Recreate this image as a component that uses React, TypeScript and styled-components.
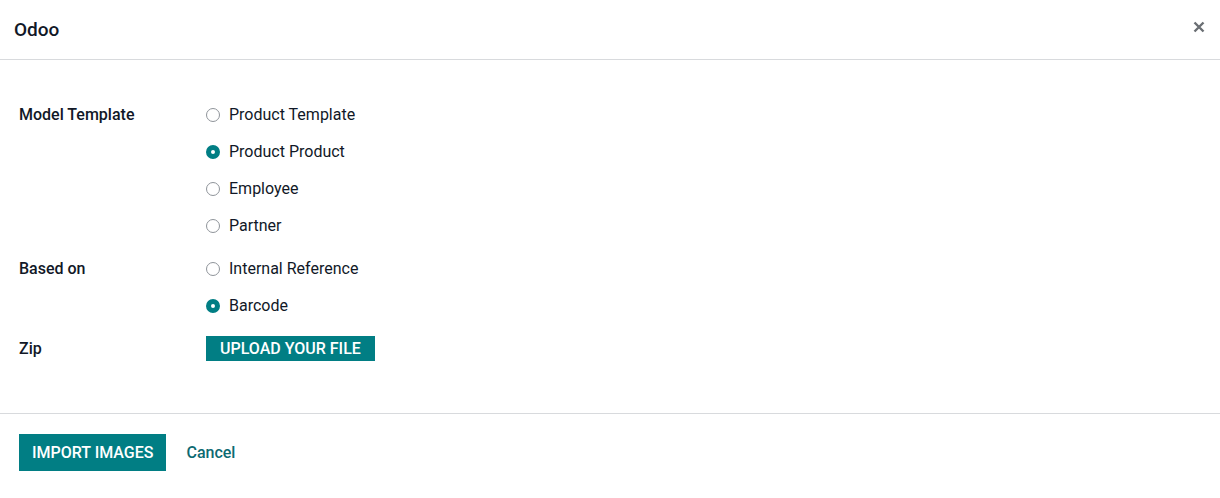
import React, { useState } from 'react';
import styled, { createGlobalStyle } from 'styled-components';

const teal = '#017e84';

const GlobalStyle = createGlobalStyle`
  html, body {
    margin: 0;
    padding: 0;
    background: #ffffff;
  }
  body {
    font-family: Roboto, "Noto Sans", sans-serif;
    color: #111827;
  }
`;

const Dialog = styled.div`
  width: 1220px;
  height: 498px;
  display: flex;
  flex-direction: column;
  background: #fff;
`;

const Header = styled.header`
  height: 59px;
  border-bottom: 1px solid #d8dadd;
  display: flex;
  align-items: center;
  justify-content: space-between;
  padding: 0 14px;
  box-sizing: content-box;
`;

const Title = styled.h4`
  margin: 0;
  font-size: 19px;
  font-weight: 500;
  color: #111827;
  line-height: 1;
  margin-top: -1px;
`;

const CloseButton = styled.button`
  border: 0;
  background: none;
  padding: 0;
  width: 14px;
  height: 14px;
  cursor: pointer;
  margin-top: -6px;
  display: flex;
  align-items: center;
  justify-content: center;
`;

const Body = styled.main`
  flex: 1;
  padding: 36px 19px 0;
  display: flex;
  flex-direction: column;
  gap: 6px;
`;

const Field = styled.div`
  display: grid;
  grid-template-columns: 187px 1fr;
`;

const Label = styled.div`
  height: 37px;
  display: flex;
  align-items: center;
  font-size: 16px;
  font-weight: 500;
  color: #111827;
`;

const Options = styled.div`
  display: flex;
  flex-direction: column;
`;

const Option = styled.label`
  height: 37px;
  display: flex;
  align-items: center;
  gap: 9px;
  font-size: 16px;
  color: #111827;
  cursor: pointer;
`;

const Radio = styled.span<{ $checked: boolean }>`
  width: 14px;
  height: 14px;
  border-radius: 50%;
  box-sizing: border-box;
  border: ${p => (p.$checked ? `5px solid ${teal}` : '1px solid #8f949a')};
  background: #fff;
  flex: none;
`;

const ButtonCell = styled.div`
  height: 37px;
  display: flex;
  align-items: center;
`;

const UploadButton = styled.button`
  height: 25px;
  padding: 0 14px;
  border: 0;
  border-radius: 0;
  background: ${teal};
  color: #fff;
  font-family: Roboto, sans-serif;
  font-size: 16px;
  font-weight: 500;
  text-transform: uppercase;
  cursor: pointer;
`;

const Footer = styled.footer`
  border-top: 1px solid #d8dadd;
  padding: 20px 19px 27px;
  display: flex;
  align-items: center;
  gap: 8px;
`;

const PrimaryButton = styled.button`
  height: 37px;
  padding: 0 13px;
  border: 0;
  border-radius: 0;
  background: ${teal};
  color: #fff;
  font-family: Roboto, sans-serif;
  font-size: 16px;
  font-weight: 500;
  cursor: pointer;
`;

const LinkButton = styled.button`
  height: 37px;
  padding: 0 12px;
  border: 0;
  background: none;
  color: #0d6a72;
  font-family: Roboto, sans-serif;
  font-size: 16px;
  font-weight: 500;
  cursor: pointer;
`;

type Opt = { value: string; label: string };

function RadioGroup({
  options,
  value,
  onChange,
}: {
  options: Opt[];
  value: string;
  onChange: (v: string) => void;
}) {
  return (
    <Options>
      {options.map(o => (
        <Option key={o.value} onClick={() => onChange(o.value)}>
          <Radio $checked={o.value === value} />
          {o.label}
        </Option>
      ))}
    </Options>
  );
}

const models: Opt[] = [
  { value: 'product.template', label: 'Product Template' },
  { value: 'product.product', label: 'Product Product' },
  { value: 'hr.employee', label: 'Employee' },
  { value: 'res.partner', label: 'Partner' },
];

const basedOn: Opt[] = [
  { value: 'default_code', label: 'Internal Reference' },
  { value: 'barcode', label: 'Barcode' },
];

export default function App() {
  const [model, setModel] = useState('product.product');
  const [field, setField] = useState('barcode');

  return (
    <>
      <GlobalStyle />
      <Dialog>
        <Header>
          <Title>Odoo</Title>
          <CloseButton aria-label="Close">
            <svg width="12" height="12" viewBox="0 0 12 12">
              <path
                d="M1.5 1.5 L10.5 10.5 M10.5 1.5 L1.5 10.5"
                stroke="#6b6f74"
                strokeWidth="2.4"
              />
            </svg>
          </CloseButton>
        </Header>
        <Body>
          <Field>
            <Label>Model Template</Label>
            <RadioGroup options={models} value={model} onChange={setModel} />
          </Field>
          <Field>
            <Label>Based on</Label>
            <RadioGroup options={basedOn} value={field} onChange={setField} />
          </Field>
          <Field>
            <Label>Zip</Label>
            <ButtonCell>
              <UploadButton>Upload your file</UploadButton>
            </ButtonCell>
          </Field>
        </Body>
        <Footer>
          <PrimaryButton>IMPORT IMAGES</PrimaryButton>
          <LinkButton>Cancel</LinkButton>
        </Footer>
      </Dialog>
    </>
  );
}
